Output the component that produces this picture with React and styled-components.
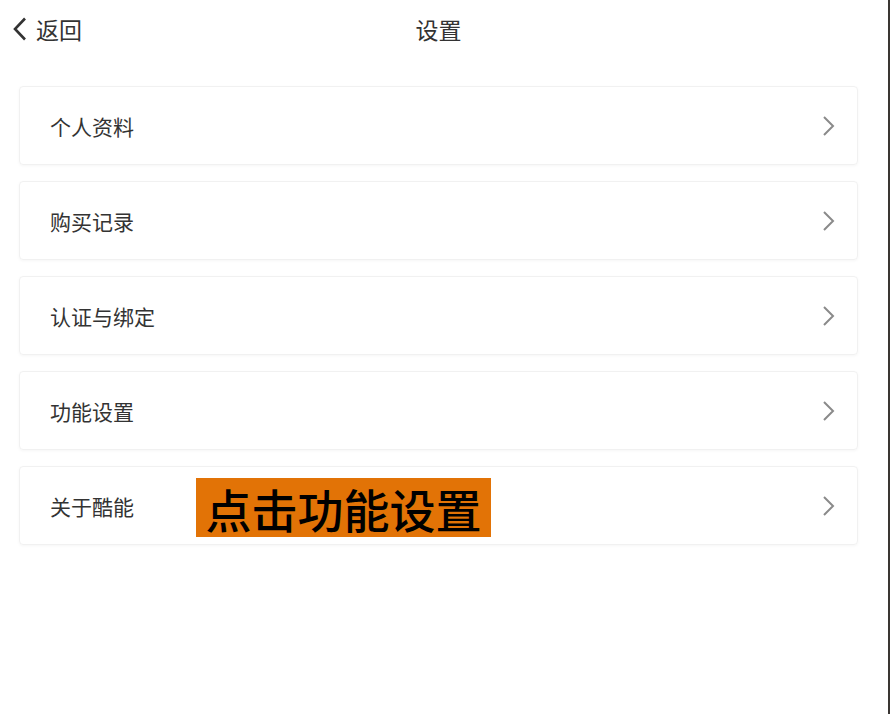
import React from "react";
import styled, { createGlobalStyle } from "styled-components";

const GlobalStyle = createGlobalStyle`
    html, body {
        margin: 0;
        padding: 0;
        background: #ffffff;
    }
    body {
        font-family: "Noto Sans CJK SC", "Liberation Sans", sans-serif;
    }
`;

const items = ["个人资料", "购买记录", "认证与绑定", "功能设置", "关于酷能"];

const App = () => {
    return (
        <>
            <GlobalStyle />
            <Screen>
                <Page>
                    <Header>
                        <BackButton>
                            <svg width="18" height="26" viewBox="0 0 18 26">
                                <path d="M14 2.5 L4 13 L14 23.5" fill="none" stroke="#333" strokeWidth="2.6" />
                            </svg>
                            <BackText>返回</BackText>
                        </BackButton>
                        <Title>设置</Title>
                    </Header>
                    <List>
                        {items.map((label, i) => (
                            <Card key={label}>
                                <Label>{label}</Label>
                                {i === 4 && <Caption>点击功能设置</Caption>}
                                <svg width="14" height="22" viewBox="0 0 14 22">
                                    <path d="M2 2 L11 11 L2 20" fill="none" stroke="#8a8a8a" strokeWidth="2" />
                                </svg>
                            </Card>
                        ))}
                    </List>
                </Page>
                <EdgeLine />
            </Screen>
        </>
    );
};

export default App;

const Screen = styled.div`
    width: 891px;
    height: 714px;
    display: flex;
    overflow: hidden;
    background: #fff;
`;

const Page = styled.div`
    width: 877px;
    display: flex;
    flex-direction: column;
`;

const EdgeLine = styled.div`
    margin-left: 11px;
    width: 2px;
    height: 714px;
    background: #3a3633;
`;

const Header = styled.div`
    height: 60px;
    position: relative;
    display: flex;
    align-items: center;
    justify-content: center;
    padding-bottom: 2px;
    box-sizing: border-box;
`;

const BackButton = styled.div`
    position: absolute;
    left: 11px;
    top: 15px;
    display: flex;
    align-items: center;
    gap: 7px;
    svg {
        display: block;
    }
`;

const BackText = styled.span`
    font-size: 23px;
    color: #333;
    line-height: 28px;
`;

const Title = styled.div`
    font-size: 23px;
    color: #333;
    line-height: 28px;
`;

const List = styled.div`
    padding: 26px 19px 0;
    display: flex;
    flex-direction: column;
    gap: 16px;
`;

const Card = styled.div`
    position: relative;
    height: 77px;
    border: 1px solid #f1f1f1;
    border-radius: 4px;
    box-shadow: 0 1px 3px rgba(0, 0, 0, 0.04);
    display: flex;
    align-items: center;
    justify-content: space-between;
    padding: 0 21px 0 30px;
    svg {
        display: block;
    }
`;

const Label = styled.span`
    font-size: 21px;
    color: #333;
`;

const Caption = styled.div`
    position: absolute;
    left: 176px;
    top: 11px;
    width: 295px;
    height: 59px;
    background: #e27306;
    color: #000;
    font-size: 46px;
    font-weight: 500;
    display: flex;
    align-items: center;
    justify-content: center;
`;
